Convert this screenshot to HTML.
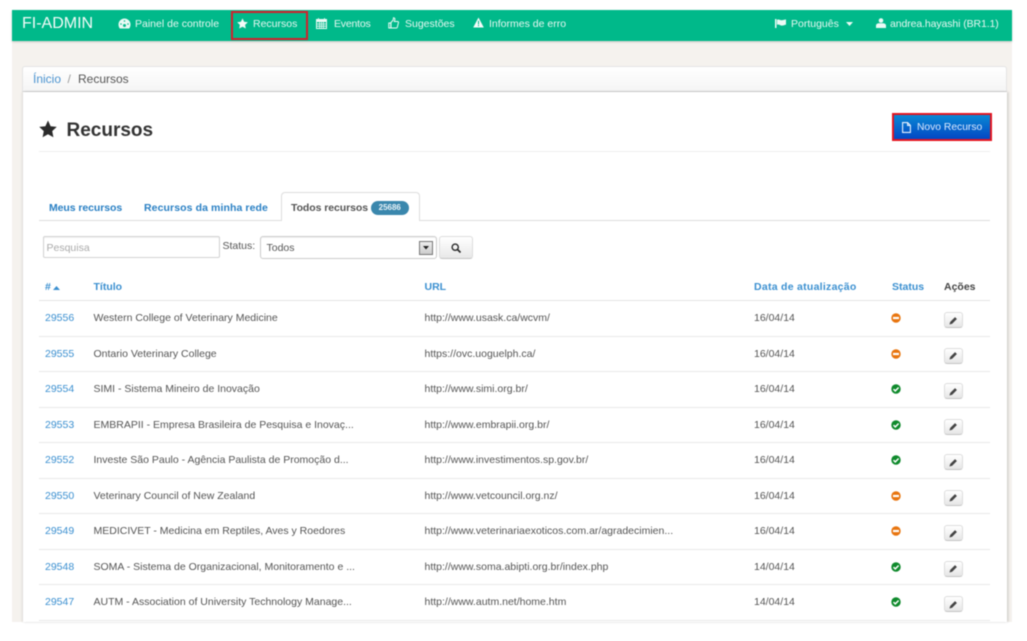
<!DOCTYPE html>
<html lang="pt"><head><meta charset="utf-8"><title>FI-ADMIN</title>
<style>
html,body{margin:0;padding:0;background:#fff;width:1027px;height:641px;overflow:hidden}
body{position:relative;font-family:"Liberation Sans",Arial,sans-serif;font-size:10.5px;color:#555}
.a{position:absolute;white-space:nowrap}
svg{position:absolute;display:block}
#root{position:absolute;left:0;top:0;width:1027px;height:641px;overflow:hidden;filter:blur(.45px)}
.nav{color:#e6f8f2;font-size:10.5px;line-height:14px;top:17px}
.h{top:280px;line-height:14px;font-size:10.5px;font-weight:bold;color:#3a8fd0}
.r{position:absolute;left:39px;width:951px;height:31.5px;border-bottom:1.5px solid #e8e8e8;box-sizing:border-box}
.r span{position:absolute;top:6px;line-height:14px;white-space:nowrap;color:#555}
.r .id{left:6px;color:#3a8fd0}
.r .t{left:54.5px}.r .u{left:385.5px}.r .d{left:715px}
.r svg.s{left:851.5px;top:8px}
.r i{position:absolute;left:905px;top:7px;width:17px;height:14px;border:1px solid #ddd;border-bottom-color:#c4c4c4;border-radius:3px;background:linear-gradient(#fff,#e6e6e6);box-sizing:content-box}
.r i svg{left:4px;top:2.5px}
</style></head><body>
<svg width="0" height="0" style="position:absolute"><defs>
<symbol id="star" viewBox="0 0 20 20"><path d="M10 .6l2.900 6.300 6.800.8-5 4.700 1.300 6.800-6-3.400-6 3.400 1.300-6.800-5-4.700 6.800-.8z"/></symbol>
<symbol id="minus" viewBox="0 0 10 10"><circle cx="5" cy="5" r="4.700" fill="#e8750f"/><rect x="2" y="3.900" width="6" height="2.200" fill="#fff"/></symbol>
<symbol id="ok" viewBox="0 0 10 10"><circle cx="5" cy="5" r="4.700" fill="#0f8a2c"/><path d="M2.500 5.100l1.800 1.800 3.300-3.400" fill="none" stroke="#fff" stroke-width="1.500"/></symbol>
<symbol id="pen" viewBox="0 0 10 10"><path d="M6.700 1.200l2.100 2.100-5.300 5.300-3 .9.900-3z" fill="#444"/></symbol>
</defs></svg>
<div id="root">
<div class="a" style="left:12px;top:41px;width:1000px;height:581px;background:#f5f2ee"></div>
<div class="a" style="left:12px;top:10px;width:1000px;height:31px;background:#00b98a;box-shadow:0 1px 2px rgba(0,0,0,.18)"></div>
<div class="a" style="left:22px;top:14px;color:#f2fbf8;font-size:16px;line-height:20px">FI-ADMIN</div>

<svg style="left:118px;top:17.500px" width="13" height="11" viewBox="0 0 13 11"><path d="M6.500 0.500A6 6 0 0 0 .5 6.500c0 1.500.5 2.900 1.300 4h9.400c.8-1.100 1.300-2.500 1.300-4a6 6 0 0 0-6-6z" fill="#eafaf5"/><circle cx="6.500" cy="7.500" r="1.500" fill="#00b98a"/><circle cx="3" cy="6" r=".8" fill="#00b98a"/><circle cx="10" cy="6" r=".8" fill="#00b98a"/><circle cx="6.500" cy="3" r=".8" fill="#00b98a"/></svg>
<div class="a nav" style="left:135px">Painel de controle</div>

<div class="a" style="left:230.500px;top:10.500px;width:73px;height:25px;border:2.500px solid #d2202c;box-sizing:content-box"></div>
<svg style="left:236.500px;top:17.500px;fill:#f2fbf8" width="11" height="11"><use href="#star"/></svg>
<div class="a nav" style="left:253px">Recursos</div>

<svg style="left:316px;top:17.500px" width="11" height="11" viewBox="0 0 11 11"><rect x=".5" y="1.500" width="10" height="9" fill="none" stroke="#eafaf5"/><rect x=".5" y="1.500" width="10" height="2.500" fill="#eafaf5"/><path d="M2.500 0v2.500M8.500 0v2.500M.5 6h10M.5 8.200h10M3.500 4v6M5.500 4v6M7.500 4v6" stroke="#eafaf5" stroke-width=".8"/></svg>
<div class="a nav" style="left:334px;letter-spacing:-.2px">Eventos</div>

<svg style="left:388px;top:17px" width="11" height="12" viewBox="0 0 11 12"><path d="M.8 6h2v5h-2zM3 5.500L5.200 3 5.500.8c1.200 0 1.700 1 1.300 2.200L6.300 4.500h3.400c.8 0 .9.800.7 1.300L9.300 10.300c-.2.500-.6.700-1 .7H3z" fill="none" stroke="#eafaf5" stroke-width="1"/></svg>
<div class="a nav" style="left:405px">Sugestões</div>

<svg style="left:473px;top:17px" width="11" height="11" viewBox="0 0 11 11"><path d="M5.500.5l5.300 10H.2z" fill="#f5fcfa"/><rect x="5" y="3.800" width="1" height="3.600" fill="#00b98a"/><rect x="5" y="8" width="1" height="1.200" fill="#00b98a"/></svg>
<div class="a nav" style="left:489px">Informes de erro</div>

<svg style="left:775px;top:18.500px" width="11" height="9" viewBox="0 0 11 9"><path d="M0 0h1.500v9H0zM2 .8c2-.8 3 .5 4.500.5S9.500.6 11 .4v5.200c-1.500.4-3 1.200-4.500 1S4 5 2 5.800z" fill="#eafaf5"/></svg>
<div class="a nav" style="left:791px">Português</div>
<svg style="left:846px;top:21.500px" width="7" height="4" viewBox="0 0 7 4"><path d="M0 0h7L3.500 4z" fill="#eafaf5"/></svg>
<svg style="left:876px;top:18px" width="10" height="10" viewBox="0 0 10 10"><circle cx="5" cy="2.500" r="2.300" fill="#eafaf5"/><path d="M0 10V7.500C0 6 1.500 5.200 3 5.200h4c1.500 0 3 .8 3 2.300V10z" fill="#eafaf5"/></svg>
<div class="a nav" style="left:890px;letter-spacing:-.1px">andrea.hayashi (BR1.1)</div>

<!-- breadcrumb -->
<div class="a" style="left:22px;top:66px;width:984.500px;height:26px;box-sizing:border-box;border:1px solid #e4e4e4;border-bottom-color:#d8d8d8;border-radius:3px 3px 0 0;background:linear-gradient(#fff,#f5f5f5)"></div>
<div class="a" style="left:33px;top:71.500px;font-size:12px;line-height:15px;color:#4a93d0">Ínicio</div>
<div class="a" style="left:67.500px;top:71.500px;font-size:12px;line-height:15px;color:#999">/</div>
<div class="a" style="left:78px;top:71.500px;font-size:12px;line-height:15px;color:#555">Recursos</div>

<!-- card -->
<div class="a" style="left:22.500px;top:92px;width:984px;height:530px;background:#fff;box-shadow:1.500px 0 2px rgba(0,0,0,.14),-1px 0 2px rgba(0,0,0,.1)"></div>
<svg style="left:38.500px;top:119.500px;fill:#2b2b2b" width="18" height="18"><use href="#star"/></svg>
<div class="a" style="left:66.500px;top:119.500px;font-size:19px;line-height:22px;font-weight:bold;color:#333">Recursos</div>
<div class="a" style="left:39px;top:151px;width:951px;height:1px;background:#eee"></div>

<div class="a" style="left:892px;top:113px;width:100px;height:28px;box-sizing:border-box;border:2px solid #e4141f;background:linear-gradient(#0a88d4,#0347c4)"></div>
<svg style="left:902px;top:122px" width="9" height="11" viewBox="0 0 9 11"><path d="M.6.6h5l2.800 2.800v7H.6z M5.600.6v2.800h2.800" fill="none" stroke="#e8f2ff" stroke-width="1.100"/></svg>
<div class="a" style="left:917px;top:120.500px;font-size:10.300px;line-height:14px;color:#dcecff">Novo Recurso</div>

<!-- tabs -->
<div class="a" style="left:39px;top:220px;width:951px;height:1px;background:#ddd"></div>
<div class="a" style="left:49px;top:200.500px;font-size:10.500px;line-height:14px;font-weight:bold;color:#2a80c4;letter-spacing:-.08px">Meus recursos</div>
<div class="a" style="left:144px;top:200.500px;font-size:10.500px;line-height:14px;font-weight:bold;color:#2a80c4;letter-spacing:.09px">Recursos da minha rede</div>
<div class="a" style="left:280.500px;top:192px;width:139.500px;height:29px;box-sizing:border-box;border:1px solid #ddd;border-bottom:0;border-radius:4px 4px 0 0;background:#fff"></div>
<div class="a" style="left:291px;top:200.500px;font-size:10.500px;line-height:14px;font-weight:bold;color:#555;letter-spacing:-.07px">Todos recursos</div>
<div class="a" style="left:370.500px;top:201px;width:38.500px;height:14px;border-radius:7px;background:#3a87ad;color:#e9f3f8;font-size:8px;font-weight:bold;line-height:14px;text-align:center">25686</div>

<!-- filters -->
<div class="a" style="left:43px;top:236px;width:177px;height:22px;box-sizing:border-box;border:1px solid #d2d2d2;box-shadow:inset 0 1px 1px rgba(0,0,0,.06);border-radius:2px;background:#fff"></div>
<div class="a" style="left:46.500px;top:241px;font-size:10.500px;line-height:14px;color:#aaa">Pesquisa</div>
<div class="a" style="left:222.500px;top:239px;font-size:10.500px;line-height:14px;color:#555">Status:</div>
<div class="a" style="left:259.500px;top:236px;width:177.500px;height:23px;box-sizing:border-box;border:1px solid #ccc;box-shadow:inset 0 1px 1px rgba(0,0,0,.06);border-radius:3px;background:#fff"></div>
<div class="a" style="left:266.500px;top:241px;font-size:10.500px;line-height:14px;color:#555">Todos</div>
<div class="a" style="left:419px;top:240.500px;width:14px;height:14px;box-sizing:border-box;border:1px solid #777;background:linear-gradient(#eee,#ccc)"></div>
<svg style="left:423px;top:246px" width="6" height="3.500" viewBox="0 0 6 3.500"><path d="M0 0h6L3 3.500z" fill="#222"/></svg>
<div class="a" style="left:439px;top:236px;width:34px;height:23px;box-sizing:border-box;border:1px solid #ddd;border-bottom-color:#c4c4c4;border-radius:3px;background:linear-gradient(#fff,#e8e8e8)"></div>
<svg style="left:451px;top:242.500px" width="10" height="10" viewBox="0 0 10 10"><circle cx="4.200" cy="4.200" r="3.100" fill="none" stroke="#2b2b2b" stroke-width="1.400"/><path d="M6.500 6.500l3 3" stroke="#2b2b2b" stroke-width="1.700"/></svg>

<!-- table head -->
<div class="a h" style="left:45px">#</div>
<svg style="left:53px;top:285.500px" width="7" height="4" viewBox="0 0 7 4"><path d="M3.500 0L7 4H0z" fill="#3a8fd0"/></svg>
<div class="a h" style="left:93.500px">Título</div>
<div class="a h" style="left:424.500px">URL</div>
<div class="a h" style="left:754px;letter-spacing:.27px">Data de atualização</div>
<div class="a h" style="left:892px">Status</div>
<div class="a h" style="left:944px;color:#444">Ações</div>
<div class="a" style="left:39px;top:300px;width:951px;height:1px;background:#e4e4e4"></div>

<!-- rows -->
<div class="r" style="top:305px"><span class="id">29556</span><span class="t">Western College of Veterinary Medicine</span><span class="u">http://www.usask.ca/wcvm/</span><span class="d">16/04/14</span><svg class="s" width="10" height="10"><use href="#minus"/></svg><i><svg width="9" height="9"><use href="#pen"/></svg></i></div>
<div class="r" style="top:340.500px"><span class="id">29555</span><span class="t">Ontario Veterinary College</span><span class="u">https://ovc.uoguelph.ca/</span><span class="d">16/04/14</span><svg class="s" width="10" height="10"><use href="#minus"/></svg><i><svg width="9" height="9"><use href="#pen"/></svg></i></div>
<div class="r" style="top:376px"><span class="id">29554</span><span class="t">SIMI - Sistema Mineiro de Inovação</span><span class="u">http://www.simi.org.br/</span><span class="d">16/04/14</span><svg class="s" width="10" height="10"><use href="#ok"/></svg><i><svg width="9" height="9"><use href="#pen"/></svg></i></div>
<div class="r" style="top:411.500px"><span class="id">29553</span><span class="t">EMBRAPII - Empresa Brasileira de Pesquisa e Inovaç...</span><span class="u">http://www.embrapii.org.br/</span><span class="d">16/04/14</span><svg class="s" width="10" height="10"><use href="#ok"/></svg><i><svg width="9" height="9"><use href="#pen"/></svg></i></div>
<div class="r" style="top:447px"><span class="id">29552</span><span class="t">Investe São Paulo - Agência Paulista de Promoção d...</span><span class="u">http://www.investimentos.sp.gov.br/</span><span class="d">16/04/14</span><svg class="s" width="10" height="10"><use href="#ok"/></svg><i><svg width="9" height="9"><use href="#pen"/></svg></i></div>
<div class="r" style="top:482.500px"><span class="id">29550</span><span class="t">Veterinary Council of New Zealand</span><span class="u">http://www.vetcouncil.org.nz/</span><span class="d">16/04/14</span><svg class="s" width="10" height="10"><use href="#minus"/></svg><i><svg width="9" height="9"><use href="#pen"/></svg></i></div>
<div class="r" style="top:518px"><span class="id">29549</span><span class="t">MEDICIVET - Medicina em Reptiles, Aves y Roedores</span><span class="u">http://www.veterinariaexoticos.com.ar/agradecimien...</span><span class="d">16/04/14</span><svg class="s" width="10" height="10"><use href="#minus"/></svg><i><svg width="9" height="9"><use href="#pen"/></svg></i></div>
<div class="r" style="top:553.500px"><span class="id">29548</span><span class="t">SOMA - Sistema de Organizacional, Monitoramento e ...</span><span class="u">http://www.soma.abipti.org.br/index.php</span><span class="d">14/04/14</span><svg class="s" width="10" height="10"><use href="#ok"/></svg><i><svg width="9" height="9"><use href="#pen"/></svg></i></div>
<div class="r" style="top:589px"><span class="id">29547</span><span class="t">AUTM - Association of University Technology Manage...</span><span class="u">http://www.autm.net/home.htm</span><span class="d">14/04/14</span><svg class="s" width="10" height="10"><use href="#ok"/></svg><i><svg width="9" height="9"><use href="#pen"/></svg></i></div>
</div>
</body></html>
